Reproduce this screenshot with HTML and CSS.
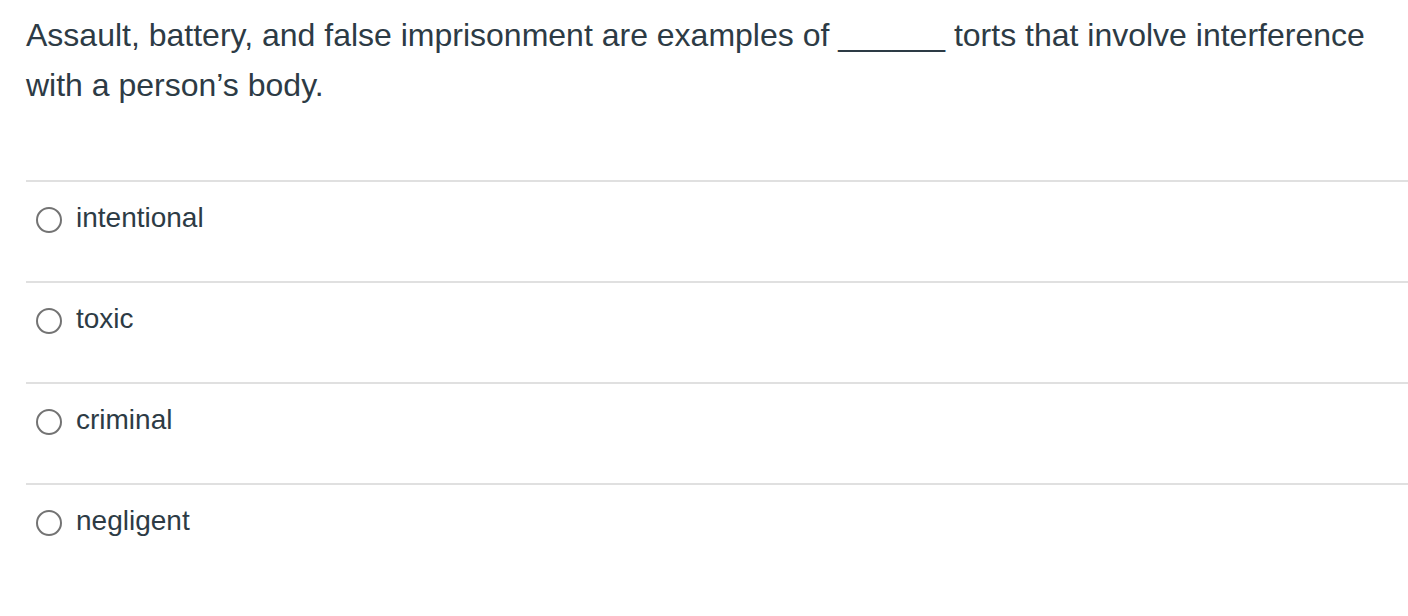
FILE: index.html
```html
<!DOCTYPE html>
<html lang="en">
<head>
<meta charset="utf-8">
<title>Question</title>
<link rel="stylesheet" href="styles.css">
</head>
<body>
<div class="question">
  <div class="question-text">Assault, battery, and false imprisonment are examples of <span class="blank">______</span> torts that involve interference with a person’s body.</div>
  <div class="answers">
    <label class="answer"><span class="radio"></span><span class="answer-text">intentional</span></label>
    <label class="answer"><span class="radio"></span><span class="answer-text">toxic</span></label>
    <label class="answer"><span class="radio"></span><span class="answer-text">criminal</span></label>
    <label class="answer"><span class="radio"></span><span class="answer-text">negligent</span></label>
  </div>
</div>
</body>
</html>
```

FILE: styles.css
```css
html, body {
  margin: 0;
  padding: 0;
  background: #ffffff;
}
body {
  font-family: "Liberation Sans", Arial, Helvetica, sans-serif;
  color: #2d3b45;
}
.question {
  padding: 10px 0 0 26px;
}
.question-text {
  font-size: 32px;
  line-height: 50px;
}
.answers {
  margin-top: 70px;
}
.answer {
  display: flex;
  align-items: flex-start;
  gap: 14px;
  height: 101px;
  box-sizing: border-box;
  border-top: 2px solid #e0e0e0;
  padding: 18px 0 0 10px;
}
.radio {
  width: 22px;
  height: 22px;
  border: 2px solid #737373;
  border-radius: 50%;
  margin-top: 7px;
  flex: none;
}
.answer-text {
  font-size: 28px;
  line-height: 36px;
}
```
